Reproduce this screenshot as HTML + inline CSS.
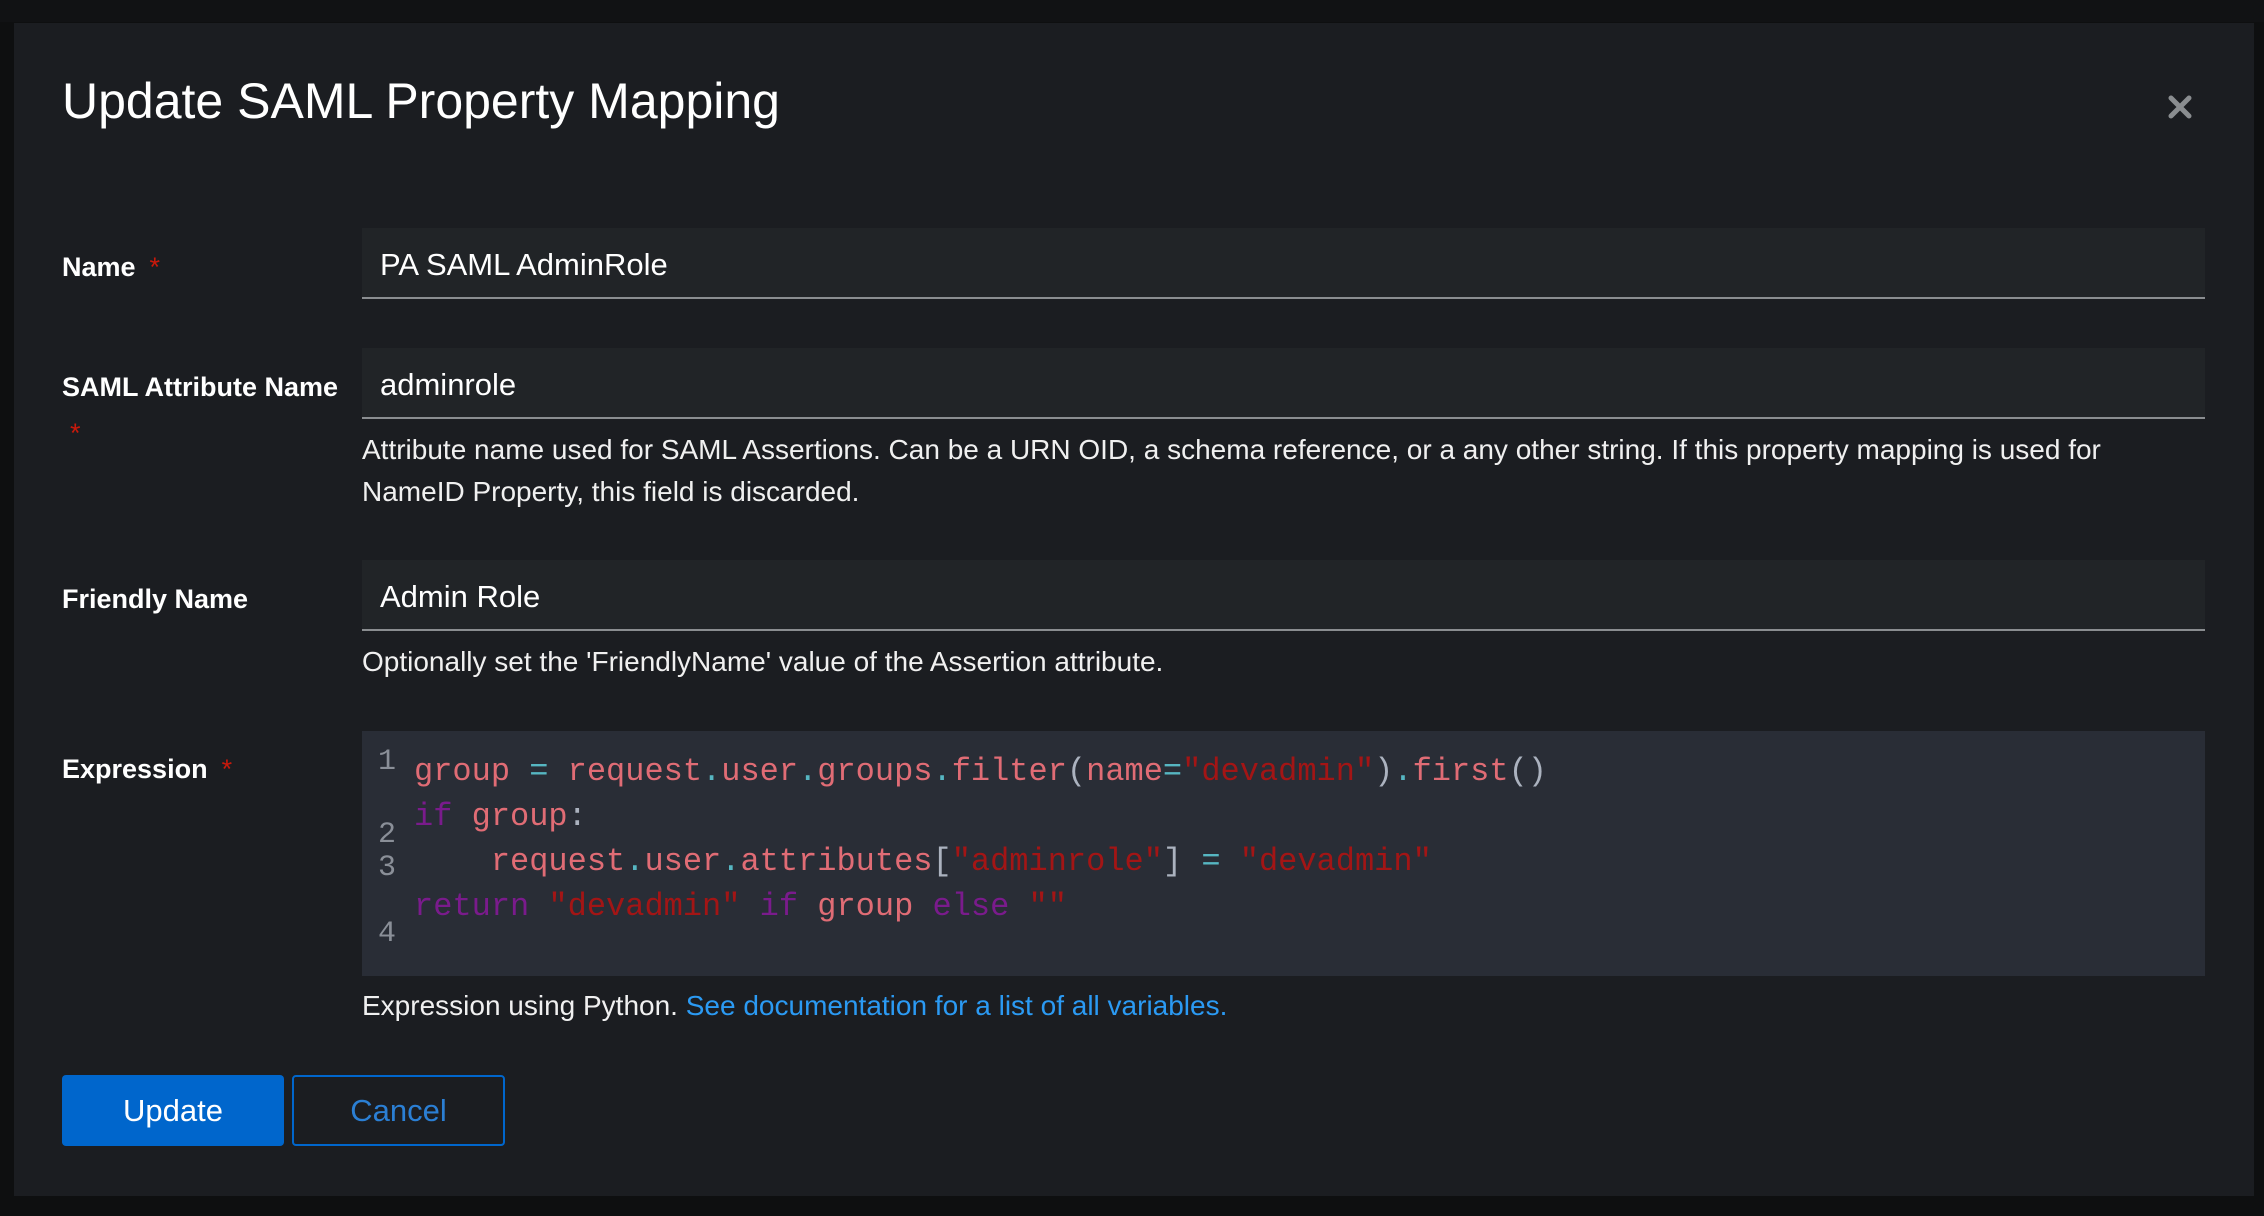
<!DOCTYPE html>
<html><head><meta charset="utf-8"><style>
*{margin:0;padding:0;box-sizing:border-box}
body{width:2264px;height:1216px;background:#0e0f10;font-family:"Liberation Sans",sans-serif;color:#fff;position:relative;overflow:hidden}
.top{position:absolute;left:0;top:0;width:2264px;height:22px;background:#111214}
.modal{position:absolute;left:14px;top:23px;width:2240px;height:1173px;background:#1b1d21}
h1{position:absolute;left:62px;top:72px;font-size:50px;font-weight:normal;letter-spacing:0px}
.close{position:absolute;left:2166px;top:93px;width:28px;height:28px}
.lbl{position:absolute;left:62px;font-size:27px;font-weight:bold}
.req{color:#c9190b;font-weight:normal;margin-left:14px}
.inp{position:absolute;left:362px;width:1843px;height:71px;background:#212427;border-bottom:2px solid #8a8d90;font-size:31px;padding-left:18px;line-height:74px}
.help{position:absolute;left:362px;font-size:28px;line-height:42px;width:1843px;color:#f0f0f0}
.code{position:absolute;left:362px;top:731px;width:1843px;height:245px;background:#292d36;font-family:"Liberation Mono",monospace;font-size:32px}
.ln{position:absolute;left:16px;color:#8a8f98;font-size:30px}
.cl{position:absolute;left:52px;white-space:pre}
.v{color:#e06c75}.o{color:#56b6c2}.s{color:#a31515}.k{color:#7a1b8c}.p{color:#abb2bf}
.btn{position:absolute;top:1075px;height:71px;font-size:31px;text-align:center;line-height:71px;border-radius:4px}
</style></head><body>
<div class="top"></div>
<div class="modal"></div>
<h1>Update SAML Property Mapping</h1>
<svg class="close" viewBox="0 0 28 28"><path d="M5 5L23 23M23 5L5 23" stroke="#8a8d90" stroke-width="5" stroke-linecap="round"/></svg>

<div class="lbl" style="top:252px">Name<span class="req">*</span></div>
<div class="inp" style="top:228px">PA SAML AdminRole</div>

<div class="lbl" style="top:372px">SAML Attribute Name</div>
<div class="lbl" style="top:418px;left:70px"><span class="req" style="margin:0">*</span></div>
<div class="inp" style="top:348px">adminrole</div>
<div class="help" style="top:429px">Attribute name used for SAML Assertions. Can be a URN OID, a schema reference, or a any other string. If this property mapping is used for NameID Property, this field is discarded.</div>

<div class="lbl" style="top:584px">Friendly Name</div>
<div class="inp" style="top:560px">Admin Role</div>
<div class="help" style="top:641px">Optionally set the 'FriendlyName' value of the Assertion attribute.</div>

<div class="lbl" style="top:754px">Expression<span class="req">*</span></div>
<div class="code">
<div class="ln" style="top:14px">1</div>
<div class="ln" style="top:87px">2</div>
<div class="ln" style="top:120px">3</div>
<div class="ln" style="top:186px">4</div>
<div class="cl" style="top:22px"><span class="v">group</span> <span class="o">=</span> <span class="v">request</span><span class="o">.</span><span class="v">user</span><span class="o">.</span><span class="v">groups</span><span class="o">.</span><span class="v">filter</span><span class="p">(</span><span class="v">name</span><span class="o">=</span><span class="s">"devadmin"</span><span class="p">)</span><span class="o">.</span><span class="v">first</span><span class="p">()</span></div>
<div class="cl" style="top:67px"><span class="k">if</span> <span class="v">group</span><span class="p">:</span></div>
<div class="cl" style="top:112px">    <span class="v">request</span><span class="o">.</span><span class="v">user</span><span class="o">.</span><span class="v">attributes</span><span class="p">[</span><span class="s">"adminrole"</span><span class="p">]</span> <span class="o">=</span> <span class="s">"devadmin"</span></div>
<div class="cl" style="top:157px"><span class="k">return</span> <span class="s">"devadmin"</span> <span class="k">if</span> <span class="v">group</span> <span class="k">else</span> <span class="s">""</span></div>
</div>
<div class="help" style="top:985px">Expression using Python. <span style="color:#2b9af3">See documentation for a list of all variables.</span></div>

<div class="btn" style="left:62px;width:222px;background:#0066cc;color:#fff">Update</div>
<div class="btn" style="left:292px;width:213px;border:2px solid #0066cc;color:#2b7fd4;line-height:67px">Cancel</div>
</body></html>
